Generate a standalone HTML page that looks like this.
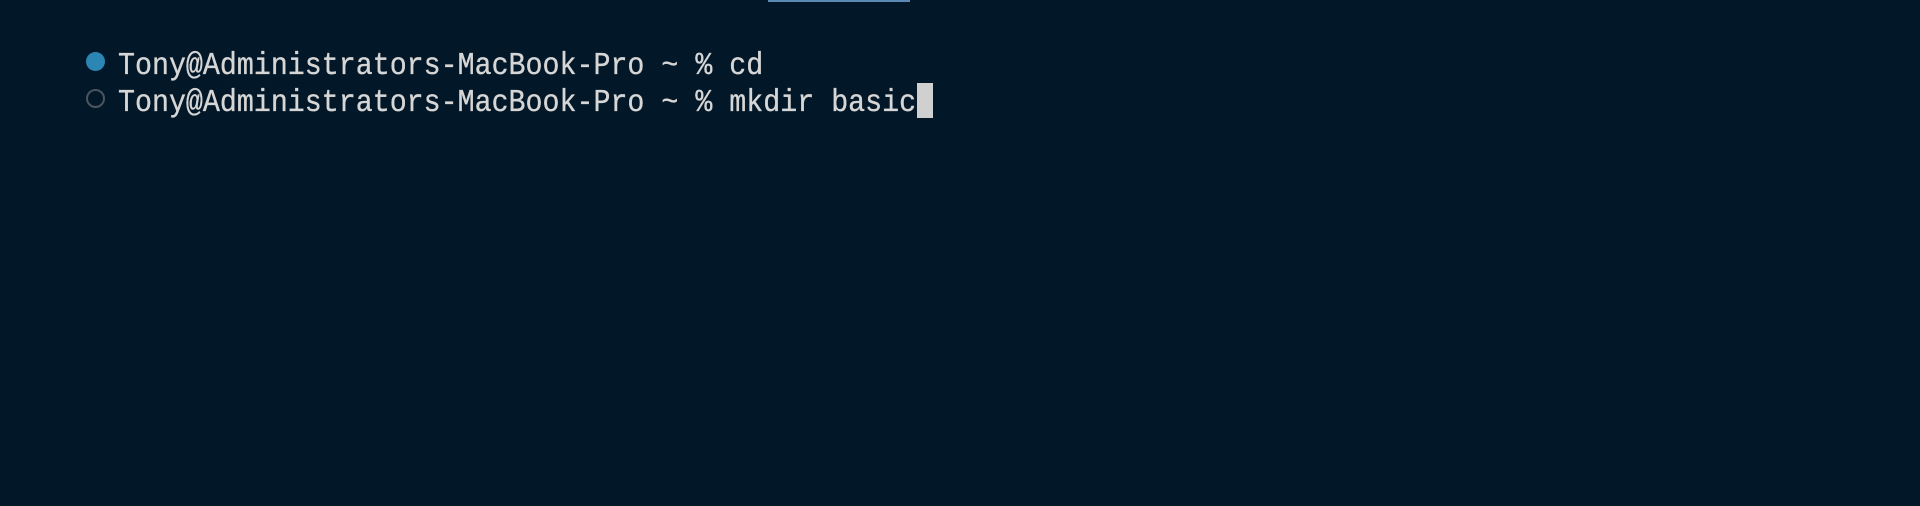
<!DOCTYPE html>
<html><head><style>
html,body{margin:0;padding:0;width:1920px;height:506px;background:#021727;overflow:hidden}
.bar{position:absolute;left:768px;top:0;width:142px;height:2px;background:#5a89b3}
.l{position:absolute;left:118px;font-family:"Liberation Mono",monospace;font-size:28.3px;color:#d6d6d6;white-space:pre;line-height:37px;transform:scaleY(1.12);transform-origin:0 50%;-webkit-text-stroke:0.3px #d6d6d6}
.d{position:absolute;width:19px;height:19px;border-radius:50%;box-sizing:border-box}
.cur{position:absolute;left:917px;top:83px;width:16px;height:35px;background:#d0d0d0}
</style></head><body>
<div class="bar"></div>
<div class="d" style="left:86px;top:52px;background:#2c86b3"></div>
<div class="d" style="left:86px;top:89px;border:2.5px solid #4a5560"></div>
<div class="l" style="top:48px">Tony@Administrators-MacBook-Pro ~ % cd</div>
<div class="l" style="top:85px">Tony@Administrators-MacBook-Pro ~ % mkdir basic</div>
<div class="cur"></div>
</body></html>
